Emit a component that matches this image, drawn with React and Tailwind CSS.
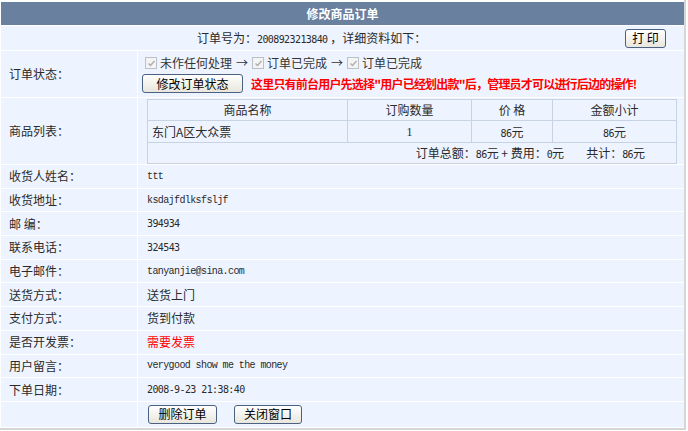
import React from "react";

const cjk = "font-['SimSun','Noto_Sans_CJK_SC',sans-serif]";

function Checkbox() {
  return (
    <span className="inline-flex w-[12px] h-[12px] border border-[#b9c0c8] bg-[#f4f4f4] items-center justify-center mr-[3px]">
      <svg width="9" height="9" viewBox="0 0 9 9">
        <path d="M1.5 4.5 L3.5 6.5 L7.5 2" fill="none" stroke="#b0b0b0" strokeWidth="1.5" />
      </svg>
    </span>
  );
}

function OldButton({ children, className = "" }) {
  return (
    <button
      className={`h-[19px] border border-[#4a6182] rounded-[3px] bg-linear-to-b from-white to-[#e8e6dc] text-[12px] text-black leading-none ${className}`}
    >
      {children}
    </button>
  );
}

const rows = [
  { label: "收货人姓名：", value: "ttt", mono: true },
  { label: "收货地址：", value: "ksdajfdlksfsljf", mono: true },
  { label: "邮 编：", value: "394934", digits: true },
  { label: "联系电话：", value: "324543", digits: true },
  { label: "电子邮件：", value: "tanyanjie@sina.com", mono: true },
  { label: "送货方式：", value: "送货上门" },
  { label: "支付方式：", value: "货到付款" },
  { label: "是否开发票：", value: "需要发票", red: true },
  { label: "用户留言：", value: "verygood show me the money", mono: true },
  { label: "下单日期：", value: "2008-9-23 21:38:40", digits: true },
];

export default function App() {
  return (
    <div className={`w-[688px] h-[431px] bg-white text-[12px] text-[#2a2a2a] ${cjk}`}>
      <div className="w-[686px] h-[430px] border-r-2 border-b-2 border-[#d6d6d6] pt-[2px] pl-[1px]">
        <div className="w-[683px] flex flex-col gap-px bg-white">
          {/* Title */}
          <div className="h-[23px] bg-[#6a809f] flex items-center justify-center text-white font-bold">
            修改商品订单
          </div>

          {/* Order number */}
          <div className="h-[24px] bg-[#eef4ff] flex items-center">
            <span className="pl-[196px]">
              订单号为：
              <span className="font-['DejaVu_Sans_Mono',monospace] text-[10px] tracking-[-0.6px]">2008923213840</span>
              {" "}，详细资料如下：
            </span>
            <OldButton className="ml-auto mr-[18px] w-[41px]">打 印</OldButton>
          </div>

          {/* Order status */}
          <div className="h-[46px] flex gap-px">
            <div className="w-[136px] bg-[#eef4ff] flex items-center pl-[8px]">订单状态：</div>
            <div className="flex-1 bg-[#eef4ff] pl-[7px] pt-[5px]">
              <div className="flex items-center h-[14px] text-[#333]">
                <Checkbox />
                <span>未作任何处理</span>
                <span className="mx-[4px]">→</span>
                <Checkbox />
                <span>订单已完成</span>
                <span className="mx-[4px]">→</span>
                <Checkbox />
                <span>订单已完成</span>
              </div>
              <div className="flex items-center mt-[4px]">
                <OldButton className="w-[101px] -ml-[3px]">修改订单状态</OldButton>
                <span className="ml-[8px] text-[#ff0000] font-semibold text-[12px] tracking-[-0.8px]">
                  这里只有前台用户先选择"用户已经划出款"后，管理员才可以进行后边的操作!
                </span>
              </div>
            </div>
          </div>

          {/* Product list */}
          <div className="h-[66px] flex gap-px">
            <div className="w-[136px] bg-[#eef4ff] flex items-center pl-[8px]">商品列表：</div>
            <div className="flex-1 bg-[#eef4ff] pl-[9px] pt-px">
              <table className="w-[530px] border-collapse border border-[#c7d2e2] text-[12px]">
                <tbody>
                  <tr className="h-[21px]">
                    <td className="w-[200px] border border-[#c7d2e2] text-center">商品名称</td>
                    <td className="w-[124px] border border-[#c7d2e2] text-center">订购数量</td>
                    <td className="w-[81px] border border-[#c7d2e2] text-center">价 格</td>
                    <td className="w-[124px] border border-[#c7d2e2] text-center">金额小计</td>
                  </tr>
                  <tr className="h-[22px]">
                    <td className="border border-[#c7d2e2] pl-[4px]">东门A区大众票</td>
                    <td className="border border-[#c7d2e2] text-center font-['Liberation_Serif',serif]">1</td>
                    <td className="border border-[#c7d2e2] text-center">
                      <span className="font-['DejaVu_Sans_Mono',monospace] text-[10px] tracking-[-0.6px]">86</span>元
                    </td>
                    <td className="border border-[#c7d2e2] text-center">
                      <span className="font-['DejaVu_Sans_Mono',monospace] text-[10px] tracking-[-0.6px]">86</span>元
                    </td>
                  </tr>
                  <tr className="h-[21px]">
                    <td colSpan={4} className="border border-[#c7d2e2] text-right pr-[31px]">
                      订单总额：<span className="font-['DejaVu_Sans_Mono',monospace] text-[10px] tracking-[-0.6px]">86</span>元 + 费用：<span className="font-['DejaVu_Sans_Mono',monospace] text-[10px] tracking-[-0.6px]">0</span>元
                      <span className="inline-block w-[22px]" />
                      共计：<span className="font-['DejaVu_Sans_Mono',monospace] text-[10px] tracking-[-0.6px]">86</span>元
                    </td>
                  </tr>
                </tbody>
              </table>
            </div>
          </div>

          {/* Detail rows */}
          {rows.map((r) => (
            <div key={r.label} className="h-[22.7px] flex gap-px">
              <div className="w-[136px] bg-[#eef4ff] flex items-center pl-[8px]">{r.label}</div>
              <div className="flex-1 bg-[#eef4ff] flex items-center pl-[9px]">
                {r.mono ? (
                  <span className="font-['Liberation_Mono',monospace] text-[10px] tracking-[-0.6px]">{r.value}</span>
                ) : r.digits ? (
                  <span className="font-['DejaVu_Sans_Mono',monospace] text-[10px] tracking-[-0.6px]">{r.value}</span>
                ) : r.red ? (
                  <span className="text-[#ff0000]">{r.value}</span>
                ) : (
                  <span>{r.value}</span>
                )}
              </div>
            </div>
          ))}

          {/* Buttons */}
          <div className="h-[25px] flex gap-px">
            <div className="w-[136px] bg-[#eef4ff]" />
            <div className="flex-1 bg-[#eef4ff] flex items-center pl-[10px] gap-[17px]">
              <OldButton className="w-[69px]">删除订单</OldButton>
              <OldButton className="w-[68px]">关闭窗口</OldButton>
            </div>
          </div>
        </div>
      </div>
    </div>
  );
}
